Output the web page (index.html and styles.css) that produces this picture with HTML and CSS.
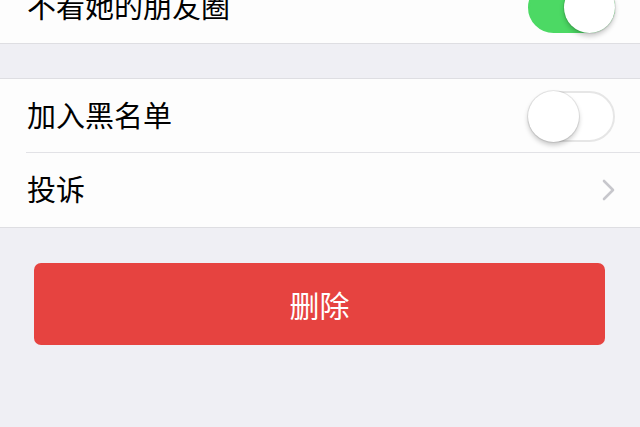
FILE: index.html
```html
<!DOCTYPE html>
<html lang="zh-CN">
<head>
<meta charset="utf-8">
<link rel="stylesheet" href="styles.css">
</head>
<body>
<div class="page">
  <div class="group group-first">
    <div class="cell">
      <span class="label">不看她的朋友圈</span>
      <span class="switch switch-on"><span class="knob"></span></span>
    </div>
  </div>
  <div class="group">
    <div class="cell">
      <span class="label">加入黑名单</span>
      <span class="switch"><span class="knob"></span></span>
    </div>
    <div class="cell cell-sep">
      <span class="label">投诉</span>
      <svg class="chevron" width="13" height="22" viewBox="0 0 13 22"><path d="M2 2 L11 11 L2 20" fill="none" stroke="#c7c7cc" stroke-width="2.6" stroke-linecap="round" stroke-linejoin="round"/></svg>
    </div>
  </div>
  <div class="btn-area">
    <div class="btn-warn">删除</div>
  </div>
</div>
</body>
</html>
```
FILE: styles.css
```css
html, body {
  margin: 0;
  padding: 0;
  background: #efeff4;
  overflow: hidden;
}
.page {
  width: 640px;
  height: 427px;
  font-family: "Noto Sans CJK SC", "Noto Sans", sans-serif;
  color: #000;
}
.group {
  background: #fdfdfd;
  border-top: 1px solid #dedee2;
  border-bottom: 1px solid #dedee2;
  margin-top: 34px;
}
.group-first {
  margin-top: -30px;
  border-top: none;
}
.cell {
  position: relative;
  height: 73px;
  display: flex;
  align-items: center;
  justify-content: space-between;
  padding: 0 25px 0 27px;
}
.cell-sep {
  height: 75px;
}
.cell-sep::before {
  content: "";
  position: absolute;
  left: 26px;
  right: 0;
  top: 0;
  height: 1px;
  background: #e2e2e6;
}
.label {
  font-size: 29px;
  line-height: 40px;
  padding-bottom: 4px;
}
.switch {
  position: relative;
  width: 87px;
  height: 51px;
  box-sizing: border-box;
  border-radius: 26px;
  border: 2px solid #e6e6e6;
  background: #fff;
  margin-top: 2px;
}
.switch .knob {
  position: absolute;
  left: -2px;
  top: -2px;
  width: 51px;
  height: 51px;
  border-radius: 50%;
  background: #fff;
  box-shadow: 0 0 0 1px rgba(0,0,0,0.08), 0 3px 5px rgba(0,0,0,0.22);
}
.switch-on {
  background: #4cd964;
  border-color: #4cd964;
}
.switch-on .knob {
  left: auto;
  right: -2px;
}
.chevron {
  display: block;
  margin-right: 0;
}
.btn-area {
  padding: 35px 35px 0 34px;
}
.btn-warn {
  height: 82px;
  border-radius: 7px;
  background: #e64340;
  color: #fff;
  font-size: 30px;
  display: flex;
  align-items: center;
  justify-content: center;
}
```
